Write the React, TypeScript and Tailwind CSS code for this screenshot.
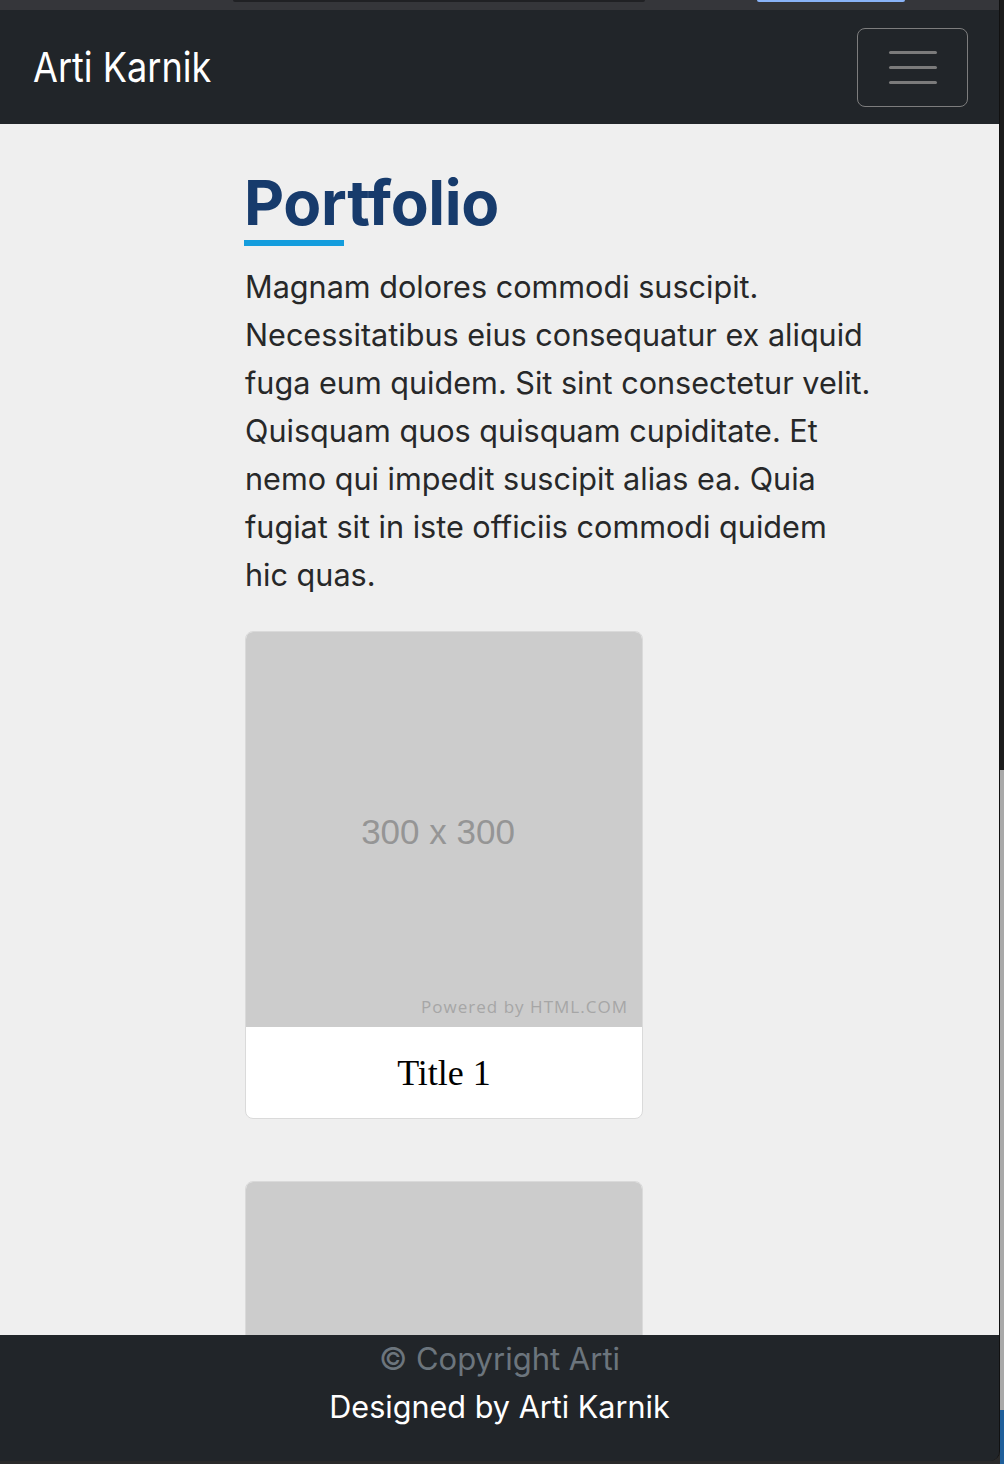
import React from 'react';

const paragraph =
  'Magnam dolores commodi suscipit. Necessitatibus eius consequatur ex aliquid fuga eum quidem. Sit sint consectetur velit. Quisquam quos quisquam cupiditate. Et nemo qui impedit suscipit alias ea. Quia fugiat sit in iste officiis commodi quidem hic quas.';

// placeholder card, the image is a grey block with its size written in it
const PortfolioCard: React.FC<{ title?: string }> = ({ title }) => (
  <div className="w-[398px] rounded-[8px] border border-[#dadada] overflow-hidden bg-white shrink-0">
    <div className="relative h-[395px] bg-[#cccccc] flex items-center justify-center">
      {title && (
        <>
          <span className="text-[35px] text-[#959595] font-['Liberation_Sans',Arial,sans-serif] -ml-[12px] mt-[6px]">
            300 x 300
          </span>
          <span className="absolute right-[14px] bottom-[8px] text-[17px] tracking-[0.06em] text-[#a6a6a6] font-['Open_Sans',sans-serif]">
            Powered by HTML.COM
          </span>
        </>
      )}
    </div>
    <div className="h-[91px] flex items-center justify-center">
      {title && (
        <span className="text-[36px] text-black font-['Liberation_Serif','Times_New_Roman',serif]">
          {title}
        </span>
      )}
    </div>
  </div>
);

export default function App() {
  return (
    <div className="w-[1004px] h-[1464px] bg-[#2a2a2a] flex overflow-hidden font-['Inter',sans-serif]">
      <div className="w-[1000px] h-[1461px] flex flex-col overflow-hidden rounded-br-[10px] border-r border-[#111]">
        {/* browser chrome strip */}
        <div className="h-[10px] bg-[#35363a] relative shrink-0">
          <div className="absolute left-[233px] top-0 w-[412px] h-[2px] rounded-b-[4px] bg-[#202124]" />
          <div className="absolute left-[757px] top-0 w-[148px] h-[2px] rounded-b-[4px] bg-[#8ab4f8]" />
        </div>

        {/* navbar */}
        <nav className="h-[114px] bg-[#212529] flex items-center justify-between pl-[33px] pr-[31px] shrink-0">
          <span className="text-white text-[41px] leading-none origin-left scale-x-[0.88] whitespace-nowrap">
            Arti Karnik
          </span>
          <button className="w-[111px] h-[79px] rounded-[8px] border-[1.5px] border-[#7d7d7d] flex flex-col items-center justify-center gap-[12px]">
            <span className="block w-[48px] h-[3px] rounded-full bg-[#7b7b7b]" />
            <span className="block w-[48px] h-[3px] rounded-full bg-[#7b7b7b]" />
            <span className="block w-[48px] h-[3px] rounded-full bg-[#7b7b7b]" />
          </button>
        </nav>

        {/* portfolio section */}
        <main className="flex-1 bg-[#efefef] overflow-hidden pl-[244px] pt-[48px]">
          <div className="w-[640px]">
            <h2 className="text-[62px] leading-[62px] font-bold text-[#173b6c] tracking-[-0.005em]">Portfolio</h2>
            <div className="mt-[6px] w-[100px] h-[6px] bg-[#149ddd]" />
            <p className="mt-[17px] ml-[1px] w-[630px] text-[30.6px] leading-[48px] text-[#272829]">{paragraph}</p>
            <div className="mt-[32px] pl-[1px] flex flex-col gap-[62px]">
              <PortfolioCard title="Title 1" />
              <PortfolioCard />
            </div>
          </div>
        </main>

        {/* footer */}
        <footer className="h-[126px] bg-[#212529] flex flex-col items-center shrink-0">
          <span className="text-[31px] leading-[48px] text-[#6c757d]">© Copyright Arti</span>
          <span className="text-[30.6px] leading-[48px] text-white">Designed by Arti Karnik</span>
        </footer>
      </div>

      {/* desktop edge behind the window */}
      <div className="w-[4px] flex flex-col">
        <div className="h-[770px] bg-[#1c1c1c]" />
        <div className="h-[640px] bg-[#a9a9a9]" />
        <div className="flex-1 bg-[#1f5f9a]" />
      </div>
    </div>
  );
}
